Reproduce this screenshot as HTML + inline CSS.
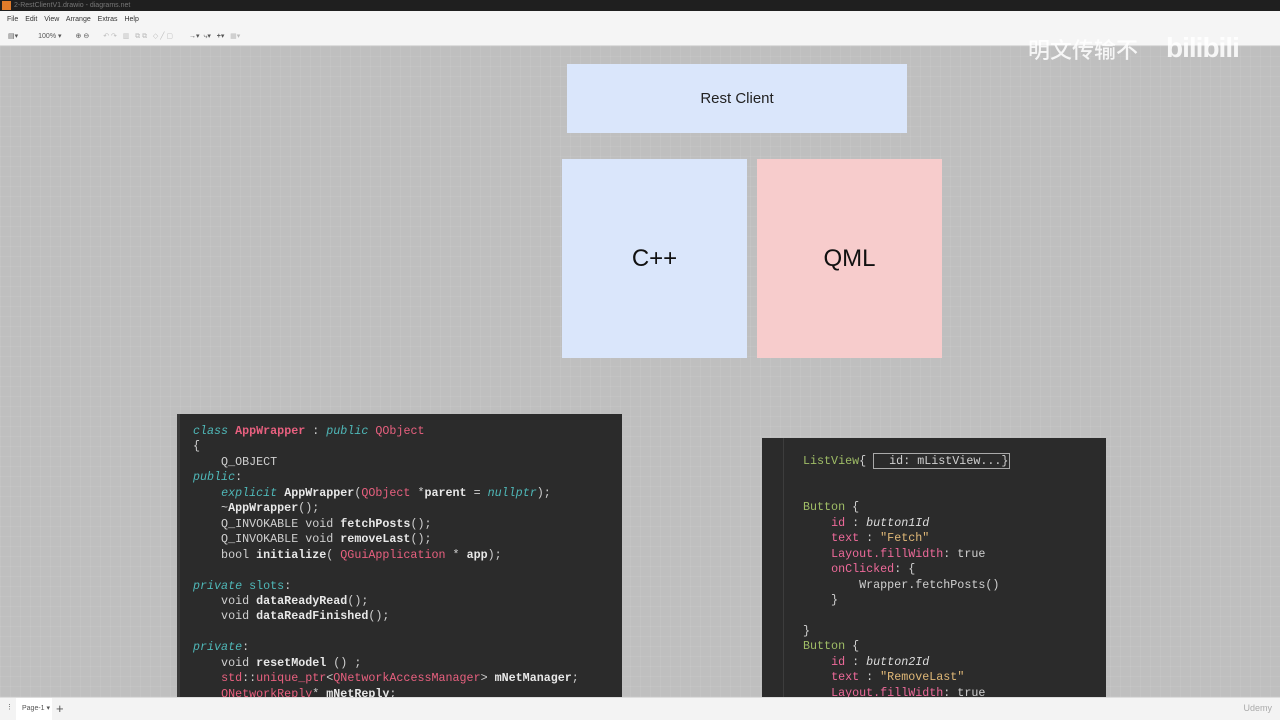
<!DOCTYPE html>
<html><head><meta charset="utf-8"><style>
*{margin:0;padding:0;box-sizing:border-box}
body{width:1280px;height:720px;overflow:hidden;font-family:"Liberation Sans",sans-serif;background:#bfbfbf;position:relative}
.title{position:absolute;left:0;top:0;width:1280px;height:11px;background:#1f1f1f;color:#777;font-size:7px;line-height:11px;padding-left:14px}
.title:before{content:"";position:absolute;left:2px;top:1px;width:9px;height:9px;background:#e07b2a}
.menu{position:absolute;left:0;top:11px;width:1280px;height:17px;background:#f5f5f5;font-size:7px;line-height:17px;color:#333;padding-left:7px;word-spacing:5px}
.tool{position:absolute;left:0;top:28px;width:1280px;height:18px;background:#f5f5f5;border-bottom:1px solid #ddd;font-size:7px;color:#555;line-height:18px}
.canvas{position:absolute;left:0;top:46px;width:1280px;height:651px;background-color:#bfbfbf;background-image:linear-gradient(90deg,rgba(255,255,255,.06) 1px,transparent 1px),linear-gradient(rgba(255,255,255,.06) 1px,transparent 1px);background-size:10px 10px}
.bottom{position:absolute;left:0;top:697px;width:1280px;height:23px;background:#f3f3f3;border-top:1px solid #ddd;font-size:7px;color:#555}
.box{position:absolute;display:flex;align-items:center;justify-content:center;color:#111}
.code{position:absolute;background:#2b2b2b;font-family:"Liberation Mono",monospace;font-size:11.7px;line-height:15.45px;color:#d0d0d0;white-space:pre;overflow:hidden}
.k{color:#4fb8b8;font-style:italic}.t{color:#e8607f}.b{font-weight:bold;color:#e8e8e8}
.g{color:#9fbd66}.p{color:#ee6a9a}.s{color:#e0b877}.i{font-style:italic;color:#ddd}
.wm{position:absolute;top:33px;left:1028px;color:rgba(255,255,255,.85);font-size:22px;font-family:"Liberation Sans","Noto Sans CJK SC",sans-serif;font-weight:500}
.bili{position:absolute;top:32px;left:1166px;color:rgba(255,255,255,.85);font-size:28px;font-weight:bold;letter-spacing:-1px}
</style></head><body>
<div class="title">2-RestClientV1.drawio - diagrams.net</div>
<div class="menu">File Edit View Arrange Extras Help</div>
<div class="tool"><span style="margin-left:8px">▤▾</span><span style="margin-left:20px">100% ▾</span><span style="margin-left:14px">⊕ ⊖</span><span style="margin-left:14px;color:#bbb">↶ ↷ &nbsp; ▥ &nbsp; ⧉ ⧉ &nbsp; ◇ ╱ ▢</span><span style="margin-left:16px">→▾ &nbsp;⤷▾ &nbsp;&nbsp;<b>+</b>▾ &nbsp;&nbsp;<span style="color:#bbb">▦▾</span></span></div>
<div class="canvas"></div>
<div class="wm">明文传输不</div>
<div class="bili">bilibili</div>

<div class="box" style="left:567px;top:64px;width:340px;height:69px;background:#dae6fb;font-size:15px;color:#222">Rest Client</div>
<div class="box" style="left:562px;top:159px;width:185px;height:199px;background:#dae6fb;font-size:24px">C++</div>
<div class="box" style="left:757px;top:159px;width:185px;height:199px;background:#f7cccc;font-size:24px">QML</div>

<div class="code" style="left:177px;top:414px;width:445px;height:283px;padding:10px 0 0 13px;border-left:3px solid #3a3a3a"><span class="k">class</span> <span class="t b" style="color:#e8607f">AppWrapper</span> : <span class="k">public</span> <span class="t">QObject</span>
{
    Q_OBJECT
<span class="k">public</span>:
    <span class="k">explicit</span> <span class="b">AppWrapper</span>(<span class="t">QObject</span> *<span class="b">parent</span> = <span class="k">nullptr</span>);
    ~<span class="b">AppWrapper</span>();
    Q_INVOKABLE void <span class="b">fetchPosts</span>();
    Q_INVOKABLE void <span class="b">removeLast</span>();
    bool <span class="b">initialize</span>( <span class="t">QGuiApplication</span> * <span class="b">app</span>);

<span class="k">private</span> <span style="color:#4fb8b8">slots</span>:
    void <span class="b">dataReadyRead</span>();
    void <span class="b">dataReadFinished</span>();

<span class="k">private</span>:
    void <span class="b">resetModel</span> () ;
    <span class="t">std</span>::<span class="t">unique_ptr</span>&lt;<span class="t">QNetworkAccessManager</span>&gt; <span class="b">mNetManager</span>;
    <span class="t">QNetworkReply</span>* <span class="b">mNetReply</span>;</div>

<div class="code" style="left:762px;top:438px;width:344px;height:259px;padding:16px 0 0 41px"><div style="position:absolute;left:21px;top:0;bottom:0;width:1px;background:#3d3d3d"></div><span class="g">ListView</span>{ <span style="border:1px solid #aaa;padding:0 1px">  id: mListView...}</span>


<span class="g">Button</span> {
    <span class="p">id</span> : <span class="i">button1Id</span>
    <span class="p">text</span> : <span class="s">"Fetch"</span>
    <span class="p">Layout.fillWidth</span>: true
    <span class="p">onClicked</span>: {
        Wrapper.fetchPosts()
    }

}
<span class="g">Button</span> {
    <span class="p">id</span> : <span class="i">button2Id</span>
    <span class="p">text</span> : <span class="s">"RemoveLast"</span>
    <span class="p">Layout.fillWidth</span>: true</div>

<div class="bottom"><span style="position:absolute;left:6px;top:5px">⋮</span><span style="position:absolute;left:16px;top:0;width:36px;height:22px;background:#fff;line-height:22px;padding-left:6px">Page-1 ▾</span><span style="position:absolute;left:56px;top:3px;font-size:13px">+</span><span style="position:absolute;right:8px;top:5px;color:#aaa;font-size:9px">Udemy</span></div>
</body></html>
